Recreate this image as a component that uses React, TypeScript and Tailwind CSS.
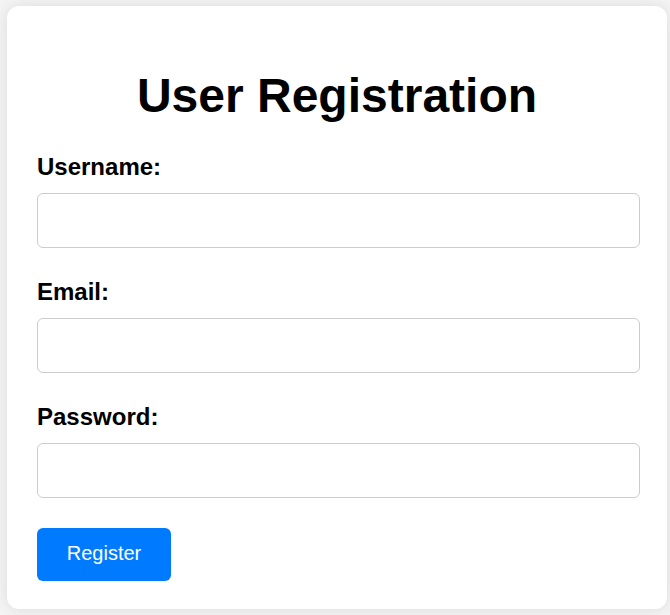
export default function App() {
  return (
    <div className="min-h-screen bg-[#f4f4f4] pl-[7px] pt-[6px] font-['Liberation_Sans',Arial,sans-serif] text-black">
      <div className="w-[660px] h-[603px] rounded-[12px] bg-white px-[30px] pt-[62px] pb-[28px] shadow-[0_0_15px_rgba(0,0,0,0.1)]">
        <h1 className="text-center text-[48px] font-bold leading-[55px] mb-[30px]">
          User Registration
        </h1>
        <form onSubmit={(e) => e.preventDefault()} className="flex flex-col">
          <label htmlFor="username" className="text-[24px] font-bold leading-[27px] mb-[13px]">
            Username:
          </label>
          <input
            id="username"
            type="text"
            className="w-[603px] h-[55px] rounded-[6px] border border-[#cccccc] px-3 mb-[30px] outline-none"
          />
          <label htmlFor="email" className="text-[24px] font-bold leading-[27px] mb-[13px]">
            Email:
          </label>
          <input
            id="email"
            type="email"
            className="w-[603px] h-[55px] rounded-[6px] border border-[#cccccc] px-3 mb-[30px] outline-none"
          />
          <label htmlFor="password" className="text-[24px] font-bold leading-[27px] mb-[13px]">
            Password:
          </label>
          <input
            id="password"
            type="password"
            className="w-[603px] h-[55px] rounded-[6px] border border-[#cccccc] px-3 mb-[30px] outline-none"
          />
          <div>
            <button
              type="submit"
              className="w-[134px] h-[53px] rounded-[6px] bg-[#007bff] pb-[3px] text-[20px] text-white"
            >
              Register
            </button>
          </div>
        </form>
      </div>
    </div>
  );
}
